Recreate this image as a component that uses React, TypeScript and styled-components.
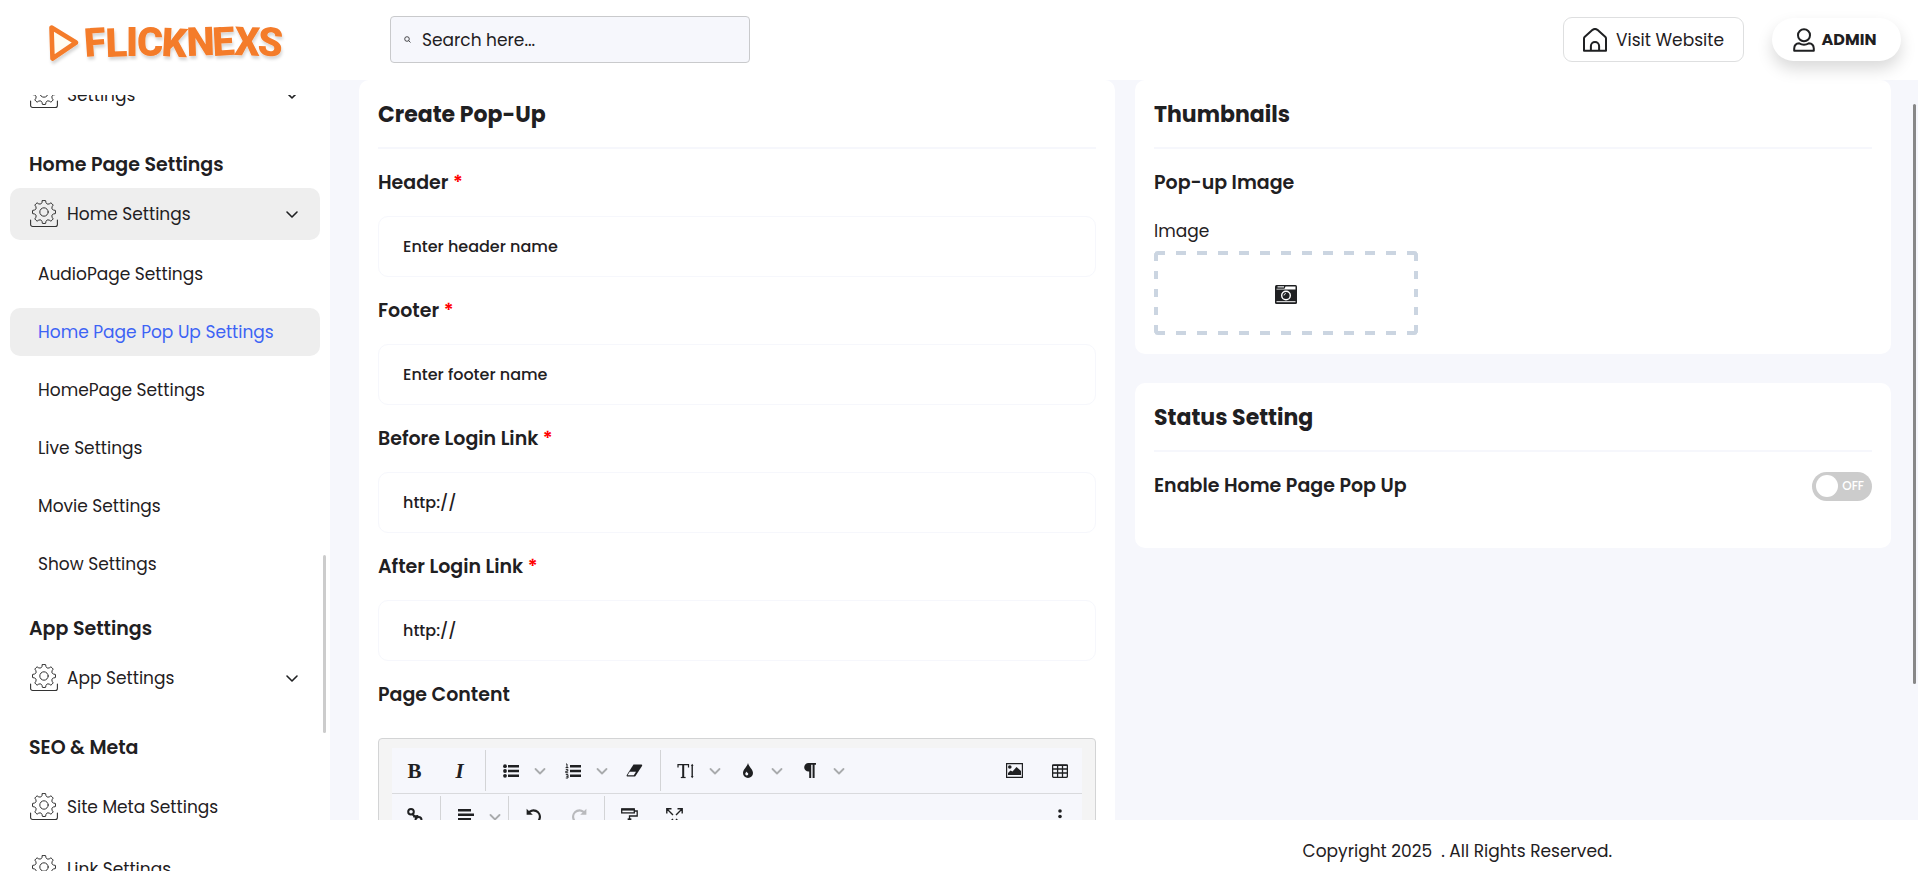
import React from 'react';
import styled, { createGlobalStyle, css } from 'styled-components';

const ink = '#1f2022';
const canvas = '#f6f7fc';
const hover = '#eeeeee';

const GlobalStyle = createGlobalStyle`
  *, *::before, *::after { box-sizing: border-box; }
  body {
    margin: 0;
    background: #fff;
    color: ${ink};
    font-family: Poppins, Inter, sans-serif;
    font-size: 17px;
    line-height: 24px;
  }
  h2, h3, h4, p, ul { margin: 0; padding: 0; }
  ul { list-style: none; }
  a { color: inherit; text-decoration: none; }
  button, input, textarea { font: inherit; color: inherit; }
  svg { display: block; flex: none; }
`;

const Shell = styled.div`
  display: flex;
  flex-direction: column;
  height: 100vh;
  overflow: hidden;
`;

const TopBar = styled.header`
  position: relative;
  z-index: 2;
  display: flex;
  align-items: center;
  flex: none;
  height: 80px;
  padding: 0 17px 1px 0;
  background: #fff;
`;

const LogoLink = styled.a`
  flex: none;
  width: 390px;
  padding-left: 44px;
`;

const SearchBox = styled.label`
  display: flex;
  align-items: center;
  gap: 11px;
  width: 360px;
  height: 47px;
  padding: 0 13px;
  border: 1px solid #c9cacc;
  border-radius: 4px;
  background: ${canvas};
`;

const SearchInput = styled.input`
  flex: 1;
  min-width: 0;
  padding: 0;
  border: 0;
  outline: 0;
  background: transparent;
  &::placeholder { color: ${ink}; opacity: 1; }
`;

const TopActions = styled.div`
  display: flex;
  align-items: center;
  gap: 28px;
  margin-left: auto;
`;

const VisitLink = styled.a`
  display: flex;
  align-items: center;
  justify-content: center;
  gap: 9px;
  width: 181px;
  height: 45px;
  border: 1px solid #dedfe0;
  border-radius: 9px;
  white-space: nowrap;
`;

const AdminButton = styled.button`
  display: flex;
  align-items: center;
  justify-content: center;
  gap: 7px;
  width: 129px;
  height: 43px;
  padding: 0 4px 0 0;
  border: 0;
  border-radius: 22px;
  background: #fff;
  box-shadow: 0 8px 16px rgba(0, 0, 0, 0.15);
  font-size: 16px;
  font-weight: 700;
`;

const Body = styled.div`
  display: flex;
  flex: 1;
  min-height: 0;
`;

const Sidebar = styled.nav`
  position: relative;
  flex: none;
  width: 330px;
  padding-top: 15px;
`;

const SidebarScroll = styled.div`
  height: 100%;
  overflow: hidden;
`;

const SidebarContent = styled.div`
  margin: -26px 10px 0;
`;

const SectionTitle = styled.h3`
  padding: 29px 0 8px 19px;
  font-size: 19px;
  font-weight: 600;
  line-height: 30px;
`;

const MenuList = styled.ul<{ $spaced?: boolean }>`
  display: flex;
  flex-direction: column;
  gap: 10px;
  ${p => p.$spaced && css`padding-top: 10px;`}
`;

const MenuLink = styled.a<{ $open?: boolean }>`
  display: flex;
  align-items: center;
  gap: 9px;
  height: 52px;
  padding: 0 20px;
  border-radius: 10px;
  background: ${p => (p.$open ? hover : 'transparent')};
`;

const MenuLabel = styled.span`
  flex: 1;
`;

const SubMenu = styled.ul`
  display: flex;
  flex-direction: column;
  gap: 10px;
  padding-top: 10px;
  margin-bottom: -3px;
`;

const SubLink = styled.a<{ $active?: boolean }>`
  display: flex;
  align-items: center;
  height: 48px;
  padding-left: 28px;
  border-radius: 10px;
  background: ${p => (p.$active ? hover : 'transparent')};
  color: ${p => (p.$active ? '#3d63f5' : ink)};
`;

const SidebarThumb = styled.span`
  position: absolute;
  top: 475px;
  right: 4px;
  width: 3px;
  height: 178px;
  border-radius: 2px;
  background: #ccc;
`;

const Page = styled.div`
  display: flex;
  flex: 1;
  flex-direction: column;
  min-width: 0;
`;

const Main = styled.main`
  position: relative;
  flex: 1;
  min-height: 0;
  overflow: hidden;
  background: ${canvas};
`;

const Columns = styled.div`
  display: grid;
  grid-template-columns: 1fr 1fr;
  align-items: start;
  gap: 20px;
  padding: 0 27px 0 29px;
`;

const Stack = styled.div`
  display: flex;
  flex-direction: column;
  gap: 29px;
`;

const Card = styled.section`
  padding: 20px 19px 19px;
  border-radius: 10px;
  background: #fff;
`;

const CardTitle = styled.h2`
  padding-bottom: 17px;
  margin-bottom: 19px;
  border-bottom: 2px solid ${canvas};
  font-size: 22px;
  font-weight: 700;
  line-height: 30px;
`;

const Field = styled.div`
  display: flex;
  flex-direction: column;
  gap: 18px;
  margin-bottom: 19px;
`;

const labelText = css`
  font-size: 19px;
  font-weight: 600;
  line-height: 30px;
`;

const FieldLabel = styled.label`${labelText}`;

const SubTitle = styled.h3`${labelText}`;

const Required = styled.span`
  color: #f00;
`;

const TextInput = styled.input`
  width: 100%;
  height: 61px;
  padding: 0 24px;
  border: 1px solid ${canvas};
  border-radius: 10px;
  background: #fff;
  outline: 0;
  font-size: 16px;
  font-weight: 500;
  &::placeholder { color: ${ink}; opacity: 1; }
`;

const Editor = styled.div`
  margin-top: 28px;
  padding: 9px 13px 13px;
  border: 1px solid #d3d4d5;
  border-radius: 4px;
  background: #f4f4f4;
`;

const ToolbarRow = styled.div`
  display: flex;
  height: 46px;
  border-bottom: 1px solid #d9dadd;
  background: ${canvas};
`;

const ToolGroup = styled.div<{ $end?: boolean }>`
  display: flex;
  ${p => p.$end && css`margin-left: auto;`}
`;

const Separator = styled.span`
  width: 1px;
  margin: 2px 2px 2px 3px;
  background: #d3d4d6;
`;

const ToolButton = styled.button<{ $narrow?: boolean }>`
  display: flex;
  align-items: center;
  justify-content: center;
  width: ${p => (p.$narrow ? 17 : 45)}px;
  padding: ${p => (p.$narrow ? '0 3px 0 0' : '0')};
  border: 0;
  background: transparent;
`;

const Letter = styled.span<{ $italic?: boolean }>`
  font-family: 'Liberation Serif', serif;
  font-size: 21px;
  font-weight: 700;
  font-style: ${p => (p.$italic ? 'italic' : 'normal')};
`;

const EditorArea = styled.textarea`
  display: block;
  width: 100%;
  height: 240px;
  border: 0;
  resize: none;
`;

const UploadLabel = styled.label`
  display: block;
  margin: 21px 0 8px;
`;

const dash = '#cbd5e1';

const UploadButton = styled.button`
  display: flex;
  align-items: center;
  justify-content: center;
  width: 264px;
  height: 84px;
  padding: 2px 0 0;
  border: 0;
  border-radius: 4px;
  background:
    repeating-linear-gradient(90deg, ${dash} 0 10px, transparent 10px 21px) 1px 0 / 262px 4px no-repeat,
    repeating-linear-gradient(90deg, ${dash} 0 10px, transparent 10px 21px) 1px 100% / 262px 4px no-repeat,
    repeating-linear-gradient(180deg, ${dash} 0 8px, transparent 8px 18px) 0 2px / 4px 80px no-repeat,
    repeating-linear-gradient(180deg, ${dash} 0 8px, transparent 8px 18px) 100% 2px / 4px 80px no-repeat;
`;

const SwitchRow = styled.div`
  display: flex;
  align-items: center;
  justify-content: space-between;
  margin-bottom: 28px;
`;

const Switch = styled.label`
  position: relative;
  display: flex;
  align-items: center;
  justify-content: space-between;
  width: 60px;
  height: 29px;
  padding: 0 8px 0 4px;
  border-radius: 15px;
  background: #ccc;
  color: #fff;
  font-size: 12px;
  font-weight: 500;
`;

const SwitchInput = styled.input`
  position: absolute;
  inset: 0;
  margin: 0;
  opacity: 0;
`;

const Knob = styled.span`
  width: 22px;
  height: 22px;
  border-radius: 50%;
  background: #fff;
`;

const MainThumb = styled.span`
  position: absolute;
  top: 24px;
  right: 2px;
  width: 3px;
  height: 580px;
  border-radius: 2px;
  background: #888;
`;

const Footer = styled.footer`
  display: flex;
  flex: none;
  justify-content: flex-end;
  height: 51px;
  padding: 19px 306px 0 0;
  background: #fff;
  white-space: pre;
`;

/* ---- icons ---- */

const gearPath = (() => {
  const point = (deg: number, r: number) => {
    const a = (deg * Math.PI) / 180;
    return `${(14 + r * Math.sin(a)).toFixed(2)} ${(12 - r * Math.cos(a)).toFixed(2)}`;
  };
  let d = '';
  for (let k = 0; k < 8; k += 1) {
    const a = k * 45;
    d += `${k ? 'L' : 'M'}${point(a - 8, 11.5)}A11.5 11.5 0 0 1 ${point(a + 8, 11.5)}`;
    d += `L${point(a + 12, 9.6)}Q${point(a + 22.5, 7.6)} ${point(a + 33, 9.6)}`;
  }
  return `${d}Z`;
})();

const GearIcon = () => (
  <svg width="28" height="28" viewBox="0 0 28 28" fill="none" stroke="#333" strokeLinejoin="round" strokeLinecap="round" aria-hidden="true">
    <path d={gearPath} strokeWidth="1" />
    <circle cx="14" cy="12" r="4.2" strokeWidth="1" />
    <path d="M.6 20v4.500a2 2 0 0 0 2 2h22.800a2 2 0 0 0 2-2v-4.500" strokeWidth="1.100" />
  </svg>
);

const MenuChevron = () => (
  <svg width="16" height="16" viewBox="0 0 16 16" fill="none" stroke={ink} strokeWidth="1.600" strokeLinecap="round" strokeLinejoin="round" aria-hidden="true">
    <path d="M3 6 8 11 13 6" />
  </svg>
);

const Logo = () => (
  <svg width="244" height="54" viewBox="0 0 244 54" role="img" aria-label="Flicknexs">
    <defs>
      <filter id="lift" x="-10%" y="-10%" width="120%" height="140%">
        <feDropShadow dx="1" dy="3" stdDeviation="1.500" floodColor="#000" floodOpacity=".16" />
      </filter>
    </defs>
    <g filter="url(#lift)" fill="#f47b2a">
      <path d="M7.500 14.500 32 29.500 8.500 45.500Z" fill="#fffdf2" stroke="#f47b2a" strokeWidth="4.600" strokeLinejoin="round" />
      <text
        x="41 62 82 93 117 143 169 190 213"
        y="44 44 43 43 43 43 43 42 42"
        rotate="-4 -2 0 0 3 -2 -3 2 4"
        fontFamily="Roboto, sans-serif"
        fontWeight="900"
        fontSize="40"
      >
        FLICKNEXS
      </text>
    </g>
  </svg>
);

const SearchIcon = () => (
  <svg width="7" height="7" viewBox="0 0 7 7" fill="none" stroke={ink} strokeWidth=".8" aria-hidden="true">
    <circle cx="3" cy="3" r="2.300" />
    <path d="M4.700 4.700 6.500 6.500" />
  </svg>
);

const HomeIcon = () => (
  <svg width="24" height="24" viewBox="0 0 24 24" fill="none" stroke={ink} strokeWidth="2" strokeLinejoin="round" aria-hidden="true">
    <path d="M1 22.800V10.400Q1 9.400 1.800 8.700L9.600 1.800Q12 .2 14.400 1.800L22.200 8.700Q23 9.400 23 10.400V22.800Z" />
    <path d="M7.900 22.800V18a4.100 4.100 0 0 1 8.200 0v4.800" />
  </svg>
);

const UserIcon = () => (
  <svg width="22" height="24" viewBox="0 0 22 24" fill="none" stroke={ink} strokeWidth="2" strokeLinejoin="round" aria-hidden="true">
    <circle cx="11" cy="7.200" r="6" />
    <path d="M1.200 22.800V20.500Q1.400 15.500 6.200 15.300 11 18 15.800 15.300 20.600 15.500 20.800 20.500V22.800Z" />
  </svg>
);

const CameraIcon = () => (
  <svg width="22" height="19" viewBox="0 0 22 19" aria-hidden="true">
    <rect width="22" height="19" rx="1.500" fill={ink} />
    <path d="M2.500 1h6.500v1.600H2.500z" fill="#b9babc" />
    <path d="M10.500 1.500H20.500V4.600H1.500V3.800H9.500Z" fill="#fff" />
    <path d="M1.500 16.200h19v1h-19z" fill="#fff" />
    <circle cx="11" cy="10.500" r="4.300" fill={ink} stroke="#fff" strokeWidth="1.400" />
    <path d="M9 10.500a2 2 0 0 1 2-2" fill="none" stroke="#fff" strokeWidth=".8" />
  </svg>
);

const ToolChevron = () => (
  <svg width="12" height="8" viewBox="0 0 12 8" fill="none" stroke="#a9abad" strokeWidth="1.800" strokeLinecap="round" strokeLinejoin="round" aria-hidden="true">
    <path d="M1.500 2 6 6.500 10.500 2" />
  </svg>
);

const BulletIcon = () => (
  <svg width="16" height="14" viewBox="0 0 16 14" fill={ink} aria-hidden="true">
    <circle cx="2" cy="2.200" r="1.900" /><circle cx="2" cy="7" r="1.900" /><circle cx="2" cy="11.800" r="1.900" />
    <path d="M5 1h11v2.400H5zM5 5.800h11v2.400H5zM5 10.600h11V13H5z" />
  </svg>
);

const NumberIcon = () => (
  <svg width="16" height="16" viewBox="0 0 16 16" fill={ink} aria-hidden="true">
    <path d="M5 2h11v2.400H5zM5 6.800h11v2.400H5zM5 11.600h11V14H5z" />
    <path d="M1 1h1v3.600M.6 4.600h2.800M.8 6.400h2v1.800h-2v1.600h2.400M.8 11.600h2.200v3.400H.8M1.300 13.300H3" fill="none" stroke={ink} strokeWidth="1" />
  </svg>
);

const EraserIcon = () => (
  <svg width="17" height="13" viewBox="0 0 17 13" aria-hidden="true">
    <path d="M7.500.5H15.500Q16.800.7 16 2L9.500 12Q9 12.500 8.500 12.500H1.300Q0 12.300.8 11Z" fill={ink} />
    <path d="M3.700 7.800H10L7.800 11.300H1.600Z" fill={canvas} />
  </svg>
);

const TextSizeIcon = () => (
  <svg width="17" height="16" viewBox="0 0 17 16" fill="none" stroke={ink} aria-hidden="true">
    <path d="M1 4.500V1.600H11.500V4.500" strokeWidth="1.200" />
    <path d="M6.200 1.500V14.500" strokeWidth="2" />
    <path d="M3.800 14.500H8.600" strokeWidth="1.200" />
    <path d="M15.200 2V14" strokeWidth="1.400" />
    <path d="M13.800 2.800 15.200.8 16.600 2.800ZM13.800 13.200 15.200 15.200 16.600 13.200Z" fill={ink} stroke="none" />
  </svg>
);

const DropIcon = () => (
  <svg width="10" height="15" viewBox="0 0 10 15" aria-hidden="true">
    <path d="M5 0C6 4 10 6.500 10 10a5 5 0 0 1-10 0C0 6.500 4 4 5 0Z" fill={ink} />
    <path d="M3.400 8.500C3 9.500 2.300 10 2.300 11a1.500 1.500 0 0 0 3 0C5.300 10 3.800 9.500 3.400 8.500Z" fill={canvas} />
  </svg>
);

const PilcrowIcon = () => (
  <svg width="12" height="15" viewBox="0 0 12 15" fill={ink} aria-hidden="true">
    <path d="M4.500 0H12V1.800H10.600V15H8.600V1.800H7.200V15H5.200V8.600H4.500A4.300 4.300 0 0 1 4.500 0Z" />
  </svg>
);

const ImageIcon = () => (
  <svg width="17" height="15" viewBox="0 0 17 15" aria-hidden="true">
    <path d="M.6.6H16.400V14.400H.6Z" fill="none" stroke={ink} strokeWidth="1.200" />
    <circle cx="3.800" cy="4" r="1.800" fill={ink} />
    <path d="M2 12V10L4.500 7.500 6.500 8.500 10.500 4 15 8V12Z" fill={ink} />
  </svg>
);

const TableIcon = () => (
  <svg width="16" height="14" viewBox="0 0 16 14" fill="none" stroke={ink} strokeWidth="1.300" aria-hidden="true">
    <rect x=".6" y=".9" width="14.800" height="12.400" rx="1.200" />
    <path d="M0 1.400H16M.6 5H15.400M.6 9H15.400M5.600 1V13M10.500 1V13" />
  </svg>
);

const ChainIcon = () => (
  <svg width="16" height="18" viewBox="0 0 16 18" fill="none" stroke={ink} strokeWidth="2" strokeLinecap="round" aria-hidden="true">
    <circle cx="4" cy="3.800" r="2.800" />
    <circle cx="11.500" cy="12" r="3" />
    <path d="M5.800 6.500 9.500 10M7 8.500 10.500 8" />
  </svg>
);

const AlignIcon = () => (
  <svg width="16" height="16" viewBox="0 0 16 16" fill={ink} aria-hidden="true">
    <path d="M0 0h13v2.400H0zM0 4.500h16v2.400H0zM0 9h13v2.400H0zM0 13.500h16V16H0z" />
  </svg>
);

const UndoIcon = ({ flip }: { flip?: boolean }) => (
  <svg width="16" height="17" viewBox="0 0 16 17" fill="none" stroke={flip ? '#b9babd' : ink} strokeWidth="2.200" aria-hidden="true">
    <g transform={flip ? 'matrix(-1 0 0 1 16 0)' : undefined}>
      <path d="M2 5.500A6.400 6.400 0 1 1 7 15.200" />
      <path d="M.6.800V6.800H6.800Z" fill={flip ? '#b9babd' : ink} stroke="none" />
    </g>
  </svg>
);

const PaintIcon = () => (
  <svg width="17" height="18" viewBox="0 0 17 18" fill="none" stroke={ink} strokeWidth="1.300" aria-hidden="true">
    <rect x=".7" y=".9" width="12.600" height="4" />
    <path d="M.7 1.600H13.300" strokeWidth="2" />
    <path d="M13.300 3H16.200V8H8.500V11" />
    <rect x="7.300" y="11" width="2.400" height="6" fill={ink} />
  </svg>
);

const ExpandIcon = () => (
  <svg width="17" height="18" viewBox="0 0 17 18" fill="none" stroke={ink} strokeWidth="1.400" aria-hidden="true">
    <path d="M.8 5.500V.8H5.500M11.500.8H16.200V5.500M.8 12.500V17.200H5.500M11.500 17.200H16.200V12.500M1 1 7 7M16 1 10 7M1 17 7 11M16 17 10 11" />
  </svg>
);

const DotsIcon = () => (
  <svg width="4" height="16" viewBox="0 0 4 16" fill={ink} aria-hidden="true">
    <circle cx="2" cy="2" r="1.800" /><circle cx="2" cy="7.500" r="1.800" /><circle cx="2" cy="13" r="1.800" />
  </svg>
);

/* ---- parts ---- */

const Tool = ({ name, menu, children }: { name: string; menu?: boolean; children: React.ReactNode }) => (
  <>
    <ToolButton type="button" aria-label={name}>{children}</ToolButton>
    {menu && (
      <ToolButton type="button" $narrow aria-label={`${name} options`}>
        <ToolChevron />
      </ToolButton>
    )}
  </>
);

const MenuItem = ({ label, open, expandable }: { label: string; open?: boolean; expandable?: boolean }) => (
  <MenuLink href="#" $open={open}>
    <GearIcon />
    <MenuLabel>{label}</MenuLabel>
    {expandable && <MenuChevron />}
  </MenuLink>
);

const homeLinks = [
  'AudioPage Settings',
  'Home Page Pop Up Settings',
  'HomePage Settings',
  'Live Settings',
  'Movie Settings',
  'Show Settings',
];

const fields = [
  { id: 'header', label: 'Header', hint: 'Enter header name' },
  { id: 'footer', label: 'Footer', hint: 'Enter footer name' },
  { id: 'before-link', label: 'Before Login Link', hint: 'http://' },
  { id: 'after-link', label: 'After Login Link', hint: 'http://' },
];

export default function App() {
  return (
    <Shell>
      <GlobalStyle />
      <TopBar>
        <LogoLink href="#"><Logo /></LogoLink>
        <SearchBox>
          <SearchIcon />
          <SearchInput type="text" placeholder="Search here..." aria-label="Search" />
        </SearchBox>
        <TopActions>
          <VisitLink href="#"><HomeIcon />Visit Website</VisitLink>
          <AdminButton type="button"><UserIcon />ADMIN</AdminButton>
        </TopActions>
      </TopBar>

      <Body>
        <Sidebar>
          <SidebarScroll>
            <SidebarContent>
              <MenuItem label="Settings" expandable />
              <SectionTitle>Home Page Settings</SectionTitle>
              <MenuItem label="Home Settings" open expandable />
              <SubMenu>
                {homeLinks.map(label => (
                  <li key={label}>
                    <SubLink href="#" $active={label === 'Home Page Pop Up Settings'}>{label}</SubLink>
                  </li>
                ))}
              </SubMenu>
              <SectionTitle>App Settings</SectionTitle>
              <MenuItem label="App Settings" expandable />
              <SectionTitle>SEO &amp; Meta</SectionTitle>
              <MenuList $spaced>
                <li><MenuItem label="Site Meta Settings" /></li>
                <li><MenuItem label="Link Settings" /></li>
              </MenuList>
            </SidebarContent>
          </SidebarScroll>
          <SidebarThumb />
        </Sidebar>

        <Page>
          <Main>
            <Columns>
              <Card>
                <CardTitle>Create Pop-Up</CardTitle>
                {fields.map(field => (
                  <Field key={field.id}>
                    <FieldLabel htmlFor={field.id}>
                      {field.label} <Required>*</Required>
                    </FieldLabel>
                    <TextInput id={field.id} type="text" placeholder={field.hint} />
                  </Field>
                ))}
                <FieldLabel htmlFor="page-content">Page Content</FieldLabel>
                <Editor>
                  <ToolbarRow>
                    <ToolGroup>
                      <Tool name="Bold"><Letter>B</Letter></Tool>
                      <Tool name="Italic"><Letter $italic>I</Letter></Tool>
                    </ToolGroup>
                    <Separator />
                    <ToolGroup>
                      <Tool name="Bulleted list" menu><BulletIcon /></Tool>
                      <Tool name="Numbered list" menu><NumberIcon /></Tool>
                      <Tool name="Clear formatting"><EraserIcon /></Tool>
                    </ToolGroup>
                    <Separator />
                    <ToolGroup>
                      <Tool name="Font size" menu><TextSizeIcon /></Tool>
                      <Tool name="Colour" menu><DropIcon /></Tool>
                      <Tool name="Paragraph" menu><PilcrowIcon /></Tool>
                    </ToolGroup>
                    <ToolGroup $end>
                      <Tool name="Insert image"><ImageIcon /></Tool>
                      <Tool name="Insert table"><TableIcon /></Tool>
                    </ToolGroup>
                  </ToolbarRow>
                  <ToolbarRow>
                    <Tool name="Link"><ChainIcon /></Tool>
                    <Separator />
                    <Tool name="Align" menu><AlignIcon /></Tool>
                    <Separator />
                    <ToolGroup>
                      <Tool name="Undo"><UndoIcon /></Tool>
                      <Tool name="Redo"><UndoIcon flip /></Tool>
                    </ToolGroup>
                    <Separator />
                    <ToolGroup>
                      <Tool name="Copy format"><PaintIcon /></Tool>
                      <Tool name="Full size"><ExpandIcon /></Tool>
                    </ToolGroup>
                    <ToolGroup $end>
                      <Tool name="More"><DotsIcon /></Tool>
                    </ToolGroup>
                  </ToolbarRow>
                  <EditorArea id="page-content" />
                </Editor>
              </Card>

              <Stack>
                <Card>
                  <CardTitle>Thumbnails</CardTitle>
                  <SubTitle>Pop-up Image</SubTitle>
                  <UploadLabel htmlFor="popup-image">Image</UploadLabel>
                  <UploadButton id="popup-image" type="button"><CameraIcon /></UploadButton>
                </Card>
                <Card>
                  <CardTitle>Status Setting</CardTitle>
                  <SwitchRow>
                    <FieldLabel htmlFor="enable-popup">Enable Home Page Pop Up</FieldLabel>
                    <Switch>
                      <SwitchInput id="enable-popup" type="checkbox" />
                      <Knob />
                      OFF
                    </Switch>
                  </SwitchRow>
                </Card>
              </Stack>
            </Columns>
            <MainThumb />
          </Main>
          <Footer>{'Copyright 2025  . All Rights Reserved.'}</Footer>
        </Page>
      </Body>
    </Shell>
  );
}
